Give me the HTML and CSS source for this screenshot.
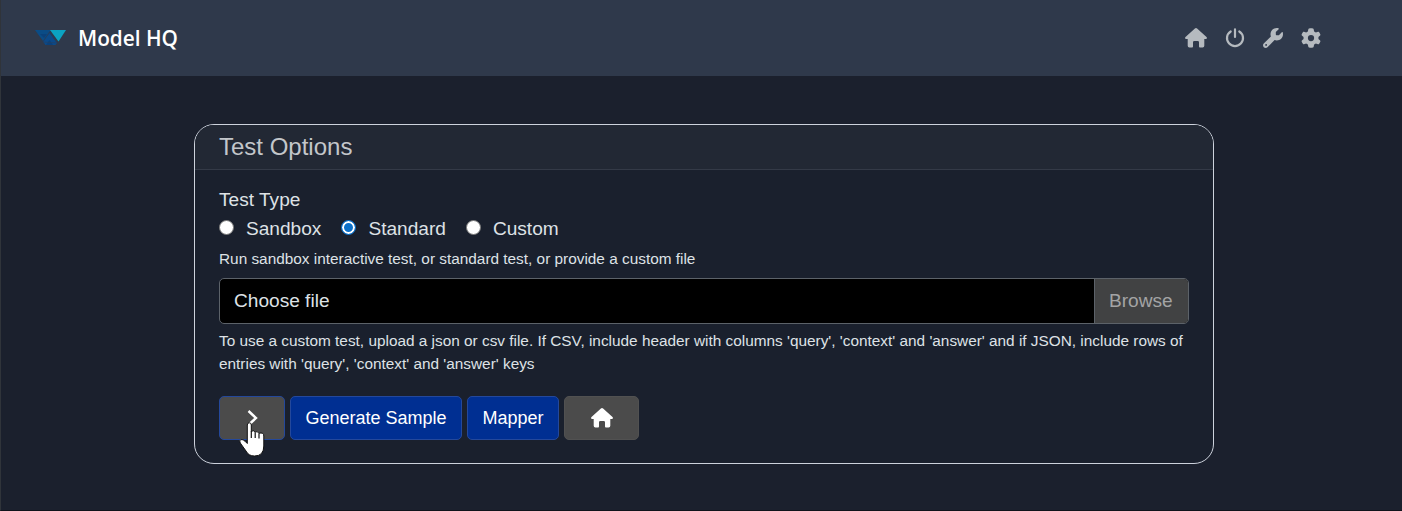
FILE: index.html
```html
<!DOCTYPE html>
<html lang="en">
<head>
<meta charset="utf-8">
<title>Model HQ</title>
<link rel="stylesheet" href="styles.css">
</head>
<body>
<svg class="defs" width="0" height="0" aria-hidden="true">
  <symbol id="home" viewBox="0 0 22 20"><path d="M9.9.5Q11-.5 12.100.5L21.500 9Q22.300 9.700 21.600 10.700Q21.300 11 20.500 11H19.300V17.800Q19.300 19.500 17.600 19.500H14.900Q14 19.500 14 18.600V14.300Q14 13 12.700 13H9.300Q8 13 8 14.300V18.600Q8 19.500 7.100 19.500H4.400Q2.700 19.500 2.700 17.800V11H1.500Q.7 11 .4 10.700Q-.3 9.700.5 9Z" fill="currentColor"/></symbol>
</svg>
<header class="topbar">
  <div class="brand">
    <svg class="logo" width="32" height="18" viewBox="0 0 32 18">
      <path d="M0 1H16L8 12Z" fill="#0a4c86"/><path d="M8 12.500L14.500 4L22 14L20.500 16H10.500Z" fill="#0b4a8a"/>
      <path d="M5 5H12L9 9ZM11 16L14.500 11L18 16Z" fill="#0a417b"/><path d="M14.500 2.500L22 14L8 13Z" fill="none" stroke="#223f63" stroke-width=".7"/><path d="M15 1H31L23.500 12.500Z" fill="#0ba3c2"/>
    </svg>
    <span class="brand-name">Model HQ</span>
  </div>
  <nav class="tools">
    <svg width="22" height="20"><use href="#home"/></svg>
    <svg width="20" height="20" viewBox="0 0 20 20" fill="none" stroke="currentColor" stroke-width="2.200" stroke-linecap="round"><path d="M10 1.400V9M5.700 3.500A8 7.900 0 1 0 14.300 3.500"/></svg>
    <svg width="20" height="20" viewBox="0 0 512 512" fill="currentColor"><path d="M352 320c88 0 160-72 160-160 0-15-2-30-6-44-3-11-17-14-25-6l-68 68c-3 3-7 5-11 5h-58c-9 0-16-7-16-16v-58c0-4 2-8 5-11l68-68c8-8 5-22-6-25-14-3-29-5-43-5-88 0-160 72-160 160 0 19 3 38 10 55L19 398C7 410 0 426 0 443c0 38 31 69 69 69 17 0 33-7 45-19l183-183c17 6 36 10 55 10ZM80 408a24 24 0 1 1 0 48 24 24 0 1 1 0-48Z"/></svg>
    <svg width="20" height="20" viewBox="0 0 512 512" fill="currentColor"><path d="M496 167c3 9 0 18-6 25l-44 39a199 199 0 0 1 0 50l44 39c6 7 9 16 6 25-8 23-20 44-36 64-6 7-16 10-25 7l-55-18c-14 10-28 19-44 26l-12 57c-2 9-9 17-18 18-33 6-67 6-100 0-9-1-16-9-18-18l-12-57c-16-7-30-16-44-26l-55 18c-9 3-19 0-25-7-16-20-28-41-36-64-3-9 0-18 6-25l44-39a199 199 0 0 1 0-50l-44-39c-6-7-9-16-6-25 8-23 20-44 36-64 6-7 16-10 25-7l55 18c14-10 28-19 44-26l12-57c2-9 9-17 18-18 33-6 67-6 100 0 9 1 16 9 18 18l12 57c16 7 30 16 44 26l55-18c9-3 19 0 25 7 16 20 28 41 36 64ZM256 336a80 80 0 1 0 0-160 80 80 0 1 0 0 160Z"/></svg>
  </nav>
</header>
<main class="card">
  <h1 class="card-title">Test Options</h1>
  <div class="card-body">
    <div class="label">Test Type</div>
    <div class="radios">
      <label class="option"><i class="radio"></i><span>Sandbox</span></label>
      <label class="option"><i class="radio checked"></i><span>Standard</span></label>
      <label class="option"><i class="radio"></i><span>Custom</span></label>
    </div>
    <p class="hint">Run sandbox interactive test, or standard test, or provide a custom file</p>
    <div class="file"><span class="file-name">Choose file</span><span class="browse">Browse</span></div>
    <p class="hint help">To use a custom test, upload a json or csv file. If CSV, include header with columns 'query', 'context' and 'answer' and if JSON, include rows of<br>entries with 'query', 'context' and 'answer' keys</p>
    <div class="actions">
      <button class="btn next"><svg width="12" height="18" viewBox="0 0 12 18" fill="none" stroke="#fff" stroke-width="2.400"><path d="M2.500 2L10 9L2.500 16"/></svg></button>
      <button class="btn generate">Generate Sample</button>
      <button class="btn mapper">Mapper</button>
      <button class="btn home"><svg width="22" height="20"><use href="#home"/></svg></button>
    </div>
  </div>
</main>
<svg class="pointer" width="26" height="36" viewBox="0 0 26 36"><path d="M8.300 3Q8.300.8 10.300.8Q12.300.8 12.300 3V9.500Q14.500 7.500 16 10.200Q18.500 8.500 19.800 11.300Q24.800 10 24.800 14V24Q24.800 34 15.500 34Q9.500 34 7 29L1.300 21Q-.3 18.300 2 17.600Q4 17 6.300 19.500L8.300 21.500Z" fill="#fff" stroke="#111" stroke-width="1"/><path d="M12.300 9V16M16.200 10.500V16M20 11.500V16.500" stroke="#111" stroke-width="1.200"/></svg>
</body>
</html>
```
FILE: styles.css
```css
* { box-sizing: border-box; }
body {
  margin: 0;
  height: 511px;
  overflow: hidden;
  background: #1b202d;
  border-left: 1px solid #30343a;
  border-bottom: 1px solid #10131b;
  font-family: "Liberation Sans", Arial, sans-serif;
  font-size: 19.1px;
  color: #dee2e6;
}
svg { display: block; }
.defs { position: absolute; }
.topbar {
  display: flex;
  align-items: center;
  justify-content: space-between;
  height: 76px;
  padding: 0 81px 0 34px;
  background: #2f394b;
}
.brand { display: flex; align-items: center; gap: 11px; }
.brand-name {
  font: 600 20.8px/30px "Open Sans", "Noto Sans", sans-serif;
  color: #fff;
}
.tools { display: flex; align-items: center; gap: 18px; color: #b5babf; }
.card {
  width: 1020px;
  height: 340px;
  margin: 48px 0 0 193px;
  border: 1px solid #cdd2dc;
  border-radius: 20px;
  overflow: hidden;
  background: #1a202d;
}
.card-title {
  margin: 0;
  height: 45px;
  padding-left: 24px;
  border-bottom: 1px solid #343a47;
  background: #222834;
  font-size: 24px;
  font-weight: 400;
  line-height: 43px;
  color: #c3c6ca;
}
.card-body { padding: 16px 24px 0; }
.label { line-height: 27px; }
.radios { display: flex; gap: 20px; height: 28px; margin-top: 2px; }
.option { display: flex; align-items: center; gap: 12px; line-height: 28px; }
.radio {
  width: 15px;
  height: 15px;
  margin-top: -4px;
  border: 1px solid #777;
  border-radius: 50%;
  background: #fff;
}
.radio.checked { border: 1px solid #0b70c9; background: #0b70c9; box-shadow: inset 0 0 0 2px #fff; }
.hint { margin: 4px 0 0; font-size: 15.36px; line-height: 23px; }
.file {
  display: flex;
  height: 46px;
  margin-top: 8px;
  border: 1px solid #5c6269;
  border-radius: 5px;
  overflow: hidden;
  background: #000;
  line-height: 44px;
}
.file-name { flex: 1; padding-left: 14px; }
.browse { width: 94px; padding-left: 14px; border-left: 1px solid #5c6269; background: #414243; color: #a3a4a5; }
.help { margin-top: 5px; }
.actions { display: flex; gap: 5px; margin-top: 21px; }
.btn {
  display: flex;
  align-items: center;
  justify-content: center;
  height: 44px;
  padding: 0;
  border: 1px solid #24489b;
  border-radius: 5px;
  background: #002f92;
  color: #fff;
  font: inherit;
  font-size: 18px;
}
.next { width: 66px; background: #4b4b4b; }
.generate { width: 172px; }
.mapper { width: 92px; }
.home { width: 75px; border-color: #515151; background: #4b4b4b; }
.pointer { position: absolute; left: 239px; top: 422px; }
```
